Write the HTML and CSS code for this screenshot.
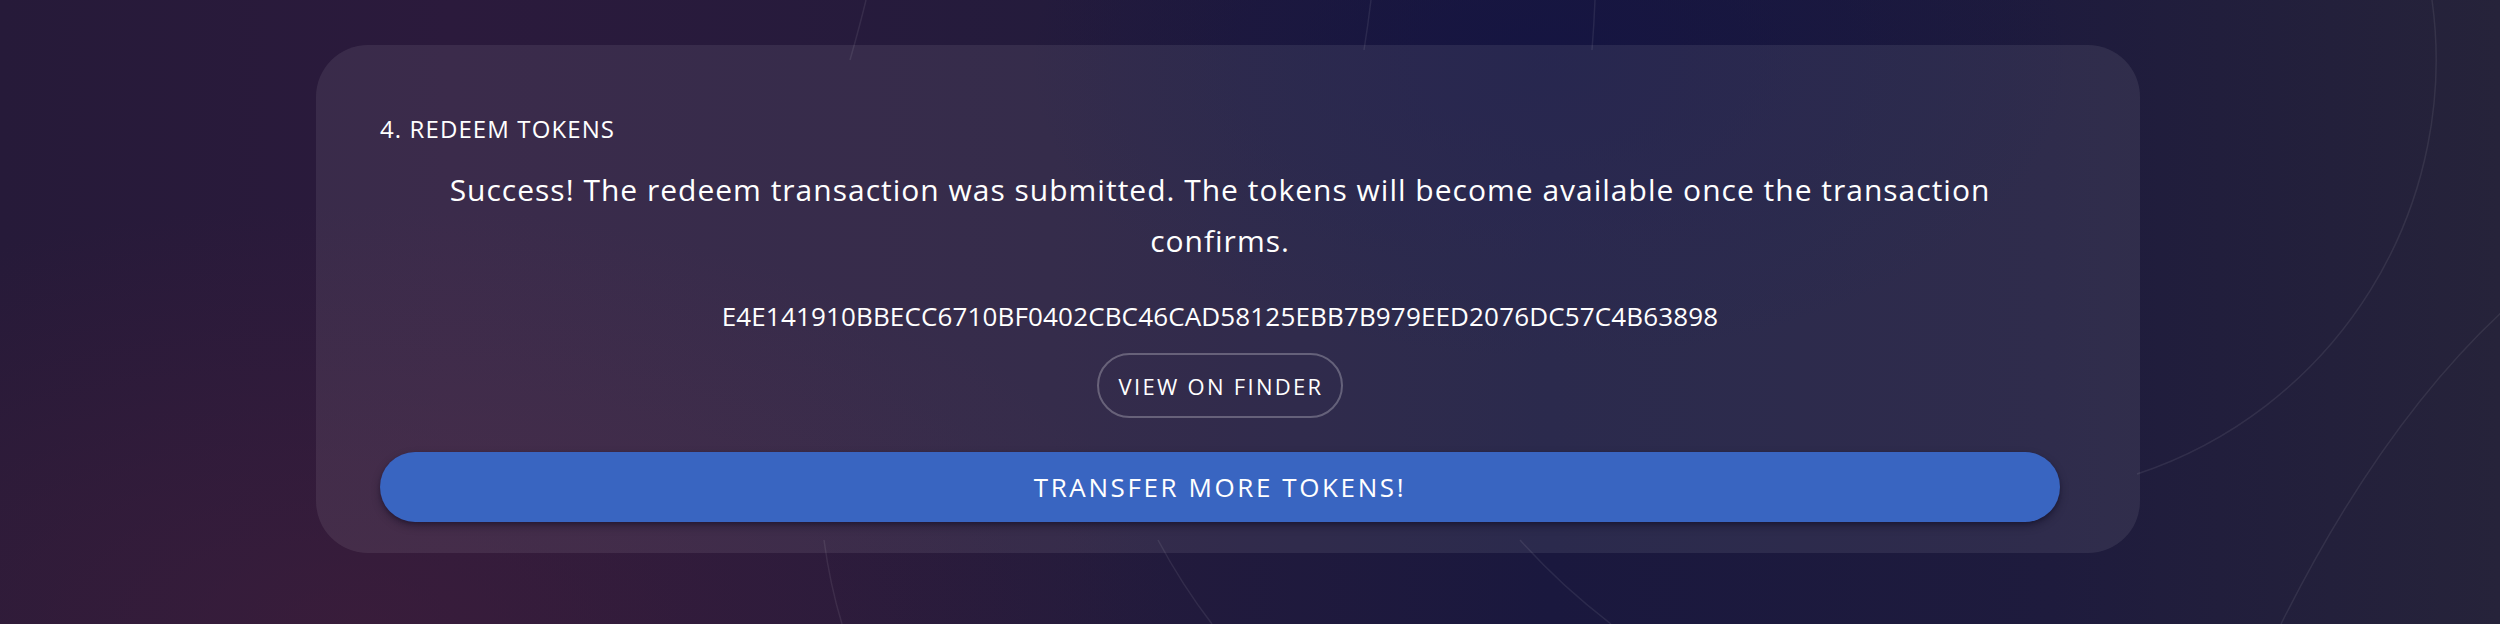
FILE: index.html
```html
<!DOCTYPE html>
<html lang="en">
<head>
<meta charset="utf-8">
<title>Redeem Tokens</title>
<link rel="stylesheet" href="styles.css">
</head>
<body>
<div class="page">
  <svg class="rings" width="2500" height="624" viewBox="0 0 2500 624" aria-hidden="true">
    <path d="M866 0 Q860 25 850 60" />
    <path d="M824 540 Q830 585 842 624" />
    <path d="M1371 0 Q1368 25 1364 50" />
    <path d="M1595 0 Q1594 25 1592 50" />
    <path d="M1158 540 Q1182 585 1212 624" />
    <path d="M1520 540 Q1560 585 1611 624" />
    <path d="M2432 0 A436 436 0 0 1 2137 474" />
    <path d="M2515 300 Q2386 414 2281 624" />
  </svg>
  <section class="card">
    <h2 class="card-title">4. REDEEM TOKENS</h2>
    <p class="message">Success! The redeem transaction was submitted. The tokens will become available once the transaction confirms.</p>
    <div class="hash">E4E141910BBECC6710BF0402CBC46CAD58125EBB7B979EED2076DC57C4B63898</div>
    <div class="finder-row">
      <a class="btn-outline" href="#">VIEW ON FINDER</a>
    </div>
    <button class="btn-primary" type="button">TRANSFER MORE TOKENS!</button>
  </section>
</div>
</body>
</html>
```

FILE: styles.css
```css
* {
  box-sizing: border-box;
}

html, body {
  margin: 0;
  padding: 0;
}

body {
  width: 2500px;
  height: 624px;
  overflow: hidden;
  font-family: "Open Sans", "Liberation Sans", sans-serif;
  color: #ffffff;
  background:
    radial-gradient(ellipse 1100px 560px at 14% 100%, rgba(66, 30, 58, 0.6), rgba(66, 30, 58, 0) 75%),
    radial-gradient(ellipse 700px 400px at 62% 10%, rgba(20, 20, 66, 0.8), rgba(20, 20, 66, 0) 75%),
    linear-gradient(90deg, #261a39 0%, #2b1a3c 18%, #241b3c 42%, #1a183e 62%, #1e1b3d 82%, #26233a 100%);
}

.page {
  position: relative;
  width: 2500px;
  height: 624px;
  padding-top: 45px;
  padding-left: 316px;
}

.rings {
  position: absolute;
  left: 0;
  top: 0;
  z-index: 0;
}

.rings path {
  fill: none;
  stroke: rgba(255, 255, 255, 0.08);
  stroke-width: 1.5;
}

.card {
  position: relative;
  z-index: 1;
  width: 1824px;
  padding: 66px 80px 31px 64px;
  border-radius: 52px;
  background: rgba(255, 255, 255, 0.08);
  display: flex;
  flex-direction: column;
}

.card-title {
  margin: 0;
  font-size: 24px;
  line-height: 36px;
  font-weight: 500;
  letter-spacing: 1.1px;
}

.message {
  margin: 17px 0 0;
  padding: 0 40px;
  text-align: center;
  font-size: 30px;
  line-height: 51px;
  font-weight: 400;
  letter-spacing: 1px;
}

.hash {
  margin-top: 31px;
  text-align: center;
  font-size: 26px;
  line-height: 39px;
  font-weight: 400;
  letter-spacing: 0.15px;
}

.finder-row {
  margin-top: 17px;
  display: flex;
  justify-content: center;
}

.btn-outline {
  display: inline-flex;
  align-items: center;
  justify-content: center;
  width: 246px;
  height: 65px;
  border: 2px solid rgba(255, 255, 255, 0.26);
  border-radius: 33px;
  color: #ffffff;
  text-decoration: none;
  font-size: 22px;
  line-height: 22px;
  font-weight: 500;
  letter-spacing: 2.3px;
  padding-left: 2px;
}

.btn-primary {
  margin-top: 34px;
  height: 70px;
  width: 100%;
  border: none;
  border-radius: 35px;
  background: #3965c1;
  color: #ffffff;
  font-family: "Open Sans", "Liberation Sans", sans-serif;
  font-size: 26px;
  line-height: 26px;
  font-weight: 500;
  letter-spacing: 2.6px;
  box-shadow: 0 4px 8px rgba(10, 5, 25, 0.35), 0 2px 3px rgba(10, 5, 25, 0.2);
  cursor: pointer;
}
```
